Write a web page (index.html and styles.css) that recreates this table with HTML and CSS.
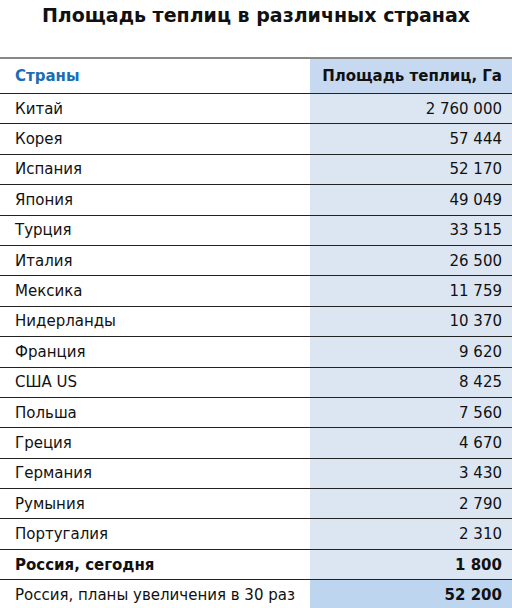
FILE: index.html
```html
<!DOCTYPE html>
<html lang="ru">
<head>
<meta charset="utf-8">
<link rel="stylesheet" href="styles.css">
</head>
<body>
<h1 class="title">Площадь теплиц в различных странах</h1>
<table class="tbl">
  <thead>
    <tr><th class="c-name">Страны</th><th class="c-val">Площадь теплиц, Га</th></tr>
  </thead>
  <tbody>
    <tr><td class="c-name">Китай</td><td class="c-val">2 760 000</td></tr>
    <tr><td class="c-name">Корея</td><td class="c-val">57 444</td></tr>
    <tr><td class="c-name">Испания</td><td class="c-val">52 170</td></tr>
    <tr><td class="c-name">Япония</td><td class="c-val">49 049</td></tr>
    <tr><td class="c-name">Турция</td><td class="c-val">33 515</td></tr>
    <tr><td class="c-name">Италия</td><td class="c-val">26 500</td></tr>
    <tr><td class="c-name">Мексика</td><td class="c-val">11 759</td></tr>
    <tr><td class="c-name">Нидерланды</td><td class="c-val">10 370</td></tr>
    <tr><td class="c-name">Франция</td><td class="c-val">9 620</td></tr>
    <tr><td class="c-name">США US</td><td class="c-val">8 425</td></tr>
    <tr><td class="c-name">Польша</td><td class="c-val">7 560</td></tr>
    <tr><td class="c-name">Греция</td><td class="c-val">4 670</td></tr>
    <tr><td class="c-name">Германия</td><td class="c-val">3 430</td></tr>
    <tr><td class="c-name">Румыния</td><td class="c-val">2 790</td></tr>
    <tr><td class="c-name">Португалия</td><td class="c-val">2 310</td></tr>
    <tr class="bold"><td class="c-name">Россия, сегодня</td><td class="c-val">1 800</td></tr>
    <tr class="plan"><td class="c-name">Россия, планы увеличения в 30 раз</td><td class="c-val">52 200</td></tr>
  </tbody>
</table>
</body>
</html>
```
FILE: styles.css
```css
html, body {
  margin: 0;
  padding: 0;
  background: #fff;
}
body {
  width: 512px;
  height: 608px;
  overflow: hidden;
  font-family: "DejaVu Sans", Verdana, sans-serif;
  color: #111;
}
.title {
  margin: 0;
  height: 57px;
  padding-top: 4px;
  box-sizing: border-box;
  font-size: 19px;
  font-weight: bold;
  text-align: center;
  color: #111;
}
.tbl {
  width: 512px;
  border-collapse: collapse;
  border-top: 2px solid #888;
  font-size: 15px;
}
.tbl th, .tbl td {
  padding: 0;
  border-bottom: 1px solid #222;
}
.tbl th {
  height: 34px;
  font-weight: bold;
}
.tbl td {
  height: 30.4px;
  box-sizing: border-box;
}
.c-name {
  text-align: left;
  padding-left: 15px !important;
}
.c-val {
  width: 192px;
  text-align: right;
  padding-right: 10px !important;
  background: #dce6f2;
}
th.c-name {
  color: #1b6db4;
}
th.c-val {
  background: #c6d9f0;
  color: #111;
}
.bold td {
  font-weight: bold;
}
.plan td.c-val {
  background: #bdd5ee;
  font-weight: bold;
}
.plan td {
  border-bottom: none;
}
```
